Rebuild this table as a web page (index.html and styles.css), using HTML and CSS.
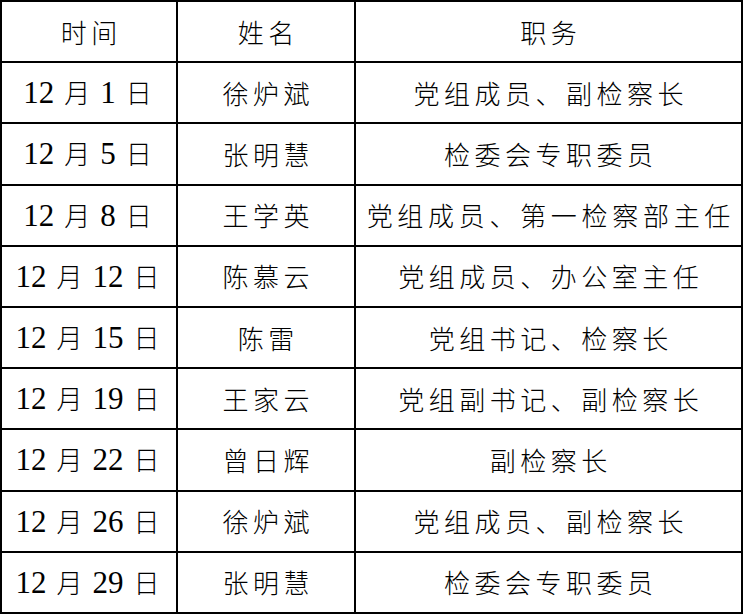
FILE: index.html
```html
<!DOCTYPE html>
<html lang="zh-CN">
<head>
<meta charset="utf-8">
<link rel="stylesheet" href="styles.css">
</head>
<body>
<div class="duty">
  <div class="cell">时间</div><div class="cell">姓名</div><div class="cell">职务</div>

  <div class="cell date"><span class="n">12</span><span>月</span><span class="n">1</span><span>日</span></div>
  <div class="cell">徐炉斌</div><div class="cell">党组成员、副检察长</div>

  <div class="cell date"><span class="n">12</span><span>月</span><span class="n">5</span><span>日</span></div>
  <div class="cell">张明慧</div><div class="cell">检委会专职委员</div>

  <div class="cell date"><span class="n">12</span><span>月</span><span class="n">8</span><span>日</span></div>
  <div class="cell">王学英</div><div class="cell wide">党组成员、第一检察部主任</div>

  <div class="cell date"><span class="n">12</span><span>月</span><span class="n">12</span><span>日</span></div>
  <div class="cell">陈慕云</div><div class="cell">党组成员、办公室主任</div>

  <div class="cell date"><span class="n">12</span><span>月</span><span class="n">15</span><span>日</span></div>
  <div class="cell">陈雷</div><div class="cell">党组书记、检察长</div>

  <div class="cell date"><span class="n">12</span><span>月</span><span class="n">19</span><span>日</span></div>
  <div class="cell">王家云</div><div class="cell">党组副书记、副检察长</div>

  <div class="cell date"><span class="n">12</span><span>月</span><span class="n">22</span><span>日</span></div>
  <div class="cell">曾日辉</div><div class="cell">副检察长</div>

  <div class="cell date"><span class="n">12</span><span>月</span><span class="n">26</span><span>日</span></div>
  <div class="cell">徐炉斌</div><div class="cell">党组成员、副检察长</div>

  <div class="cell date"><span class="n">12</span><span>月</span><span class="n">29</span><span>日</span></div>
  <div class="cell">张明慧</div><div class="cell">检委会专职委员</div>
</div>
</body>
</html>
```
FILE: styles.css
```css
html, body {
  margin: 0;
  padding: 0;
  background: #fff;
}
.duty {
  display: grid;
  grid-template-columns: 174px 176px 385px;
  grid-template-rows: repeat(10, 1fr);
  gap: 2px;
  padding: 2px;
  width: 743px;
  height: 614px;
  box-sizing: border-box;
  background: #000;
  font-family: "Noto Sans CJK SC", "Liberation Serif", serif;
  font-weight: 300;
  font-size: 26px;
  color: #000;
}
.cell {
  background: #fff;
  display: flex;
  align-items: center;
  justify-content: center;
  white-space: nowrap;
  line-height: 1;
  letter-spacing: 4.5px;
  padding-left: 4.5px;
  min-width: 0;
}
.cell.wide {
  letter-spacing: 4.7px;
  padding-left: 4.7px;
}
.cell.date {
  letter-spacing: 0;
  padding-left: 0;
  padding-right: 3px;
  gap: 10px;
  align-items: baseline;
  align-content: center;
  flex-wrap: wrap;
}
.n {
  font-family: "Liberation Serif", serif;
  font-size: 31px;
  font-weight: 400;
}
```
